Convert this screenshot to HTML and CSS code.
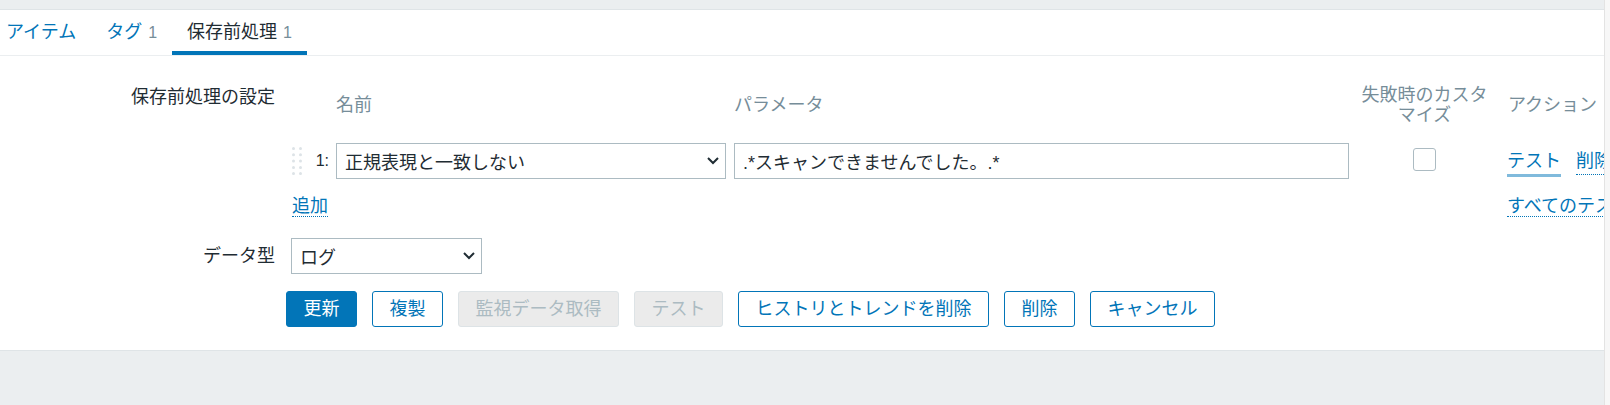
FILE: index.html
```html
<!DOCTYPE html>
<html lang="ja">
<head>
<meta charset="utf-8">
<title>保存前処理</title>
<link rel="stylesheet" href="styles.css">
</head>
<body>
<div class="page">
  <div class="main">
    <div class="panel">
      <ul class="tabs">
        <li class="tab">アイテム</li>
        <li class="tab">タグ<span class="count">1</span></li>
        <li class="tab active">保存前処理<span class="count">1</span></li>
      </ul>
      <div class="form">
        <div class="label label-top">保存前処理の設定</div>
        <div class="field">
          <div class="pp-table">
            <div class="th"></div>
            <div class="th"></div>
            <div class="th th-name">名前</div>
            <div class="th">パラメータ</div>
            <div class="th th-center">失敗時のカスタマイズ</div>
            <div class="th th-action">アクション</div>

            <div class="td td-handle">
              <svg width="10" height="28" viewBox="0 0 10 28" class="handle">
                <g fill="#dde3e7">
                  <circle cx="1.5" cy="1.5" r="1.5"/><circle cx="8.5" cy="1.5" r="1.5"/>
                  <circle cx="1.5" cy="7.8" r="1.5"/><circle cx="8.5" cy="7.8" r="1.5"/>
                  <circle cx="1.5" cy="14.1" r="1.5"/><circle cx="8.5" cy="14.1" r="1.5"/>
                  <circle cx="1.5" cy="20.4" r="1.5"/><circle cx="8.5" cy="20.4" r="1.5"/>
                  <circle cx="1.5" cy="26.5" r="1.5"/><circle cx="8.5" cy="26.5" r="1.5"/>
                </g>
              </svg>
            </div>
            <div class="td td-num">1:</div>
            <div class="td">
              <div class="select select-name"><span>正規表現と一致しない</span>
                <svg class="chevron" width="12" height="8" viewBox="0 0 12 8"><polyline points="1,1 6,6 11,1" fill="none" stroke="#1f2c33" stroke-width="2"/></svg>
              </div>
            </div>
            <div class="td">
              <div class="input">.*スキャンできませんでした。.*</div>
            </div>
            <div class="td td-center"><span class="checkbox"></span></div>
            <div class="td td-action">
              <div class="links"><a class="link-focus">テスト</a><a class="link link-gap">削除</a></div>
            </div>

            <div class="tf tf-add"><a class="link">追加</a></div>
            <div class="tf tf-action"><a class="link">すべてのテスト</a></div>
          </div>
        </div>

        <div class="label">データ型</div>
        <div class="field">
          <div class="select select-type"><span>ログ</span>
            <svg class="chevron" width="12" height="8" viewBox="0 0 12 8"><polyline points="1,1 6,6 11,1" fill="none" stroke="#1f2c33" stroke-width="2"/></svg>
          </div>
        </div>

        <div class="label"></div>
        <div class="field buttons">
          <button class="btn btn-primary">更新</button>
          <button class="btn btn-alt">複製</button>
          <button class="btn btn-disabled">監視データ取得</button>
          <button class="btn btn-disabled">テスト</button>
          <button class="btn btn-alt">ヒストリとトレンドを削除</button>
          <button class="btn btn-alt">削除</button>
          <button class="btn btn-alt">キャンセル</button>
        </div>
      </div>
    </div>
  </div>
  <div class="scrollbar"></div>
</div>
</body>
</html>
```

FILE: styles.css
```css
* { box-sizing: border-box; }

body {
  margin: 0;
  font-family: "Liberation Sans", "Noto Sans CJK JP", sans-serif;
  font-size: 18px;
  color: #1f2c33;
}

.page {
  display: flex;
  height: 405px;
  background: #ebeef0;
}

.main {
  flex: 1;
  min-width: 0;
  overflow: hidden;
  padding-top: 9px;
}

.scrollbar {
  width: 6px;
  background: #f7f7f7;
  border-left: 1px solid #e3e3e3;
}

.panel {
  background: #ffffff;
  border-top: 1px solid #dfe4e7;
  border-bottom: 1px solid #dfe4e7;
}

/* tabs */
.tabs {
  display: flex;
  list-style: none;
  margin: 0;
  padding: 0;
  height: 46px;
  border-bottom: 1px solid #ebeef0;
}

.tab {
  display: flex;
  align-items: center;
  padding: 0 15px;
  line-height: 27px;
  color: #0275b8;
}

.tab:first-child { padding-left: 6px; }

.tab.active {
  color: #1f2c33;
  box-shadow: inset 0 -4px 0 #0275b8;
}

.count {
  color: #768d99;
  font-size: 16px;
  margin-left: 6px;
}

/* form */
.form {
  display: grid;
  grid-template-columns: 275px 1fr;
  column-gap: 8px;
  row-gap: 17px;
  padding: 28px 0 23px;
}

.label {
  text-align: right;
  line-height: 36px;
  white-space: nowrap;
}

.label-top { line-height: 27px; }

.field { min-width: 0; }

/* preprocessing table */
.pp-table {
  display: grid;
  grid-template-columns: 22px 31px 398px 623px 135px 240px;
  width: 1449px;
  margin-bottom: 1px;
}

.th {
  height: 42px;
  display: flex;
  align-items: center;
  color: #768d99;
  line-height: 20px;
}

.th-center {
  justify-content: center;
  text-align: center;
}

.th-action { padding-left: 16px; white-space: nowrap; }

.td {
  height: 36px;
  margin: 17px 0 4px;
  display: flex;
  align-items: center;
}

.td-handle { padding-left: 9px; }

.td-num {
  justify-content: flex-end;
  padding-right: 7px;
  font-size: 16px;
}

.td-center { justify-content: center; }

.td-action { padding-left: 15px; }

.links {
  line-height: 27px;
  white-space: nowrap;
}

.select {
  height: 36px;
  border: 1px solid #acbbc2;
  display: flex;
  align-items: center;
  justify-content: space-between;
  padding: 0 6px 0 8px;
  background: #ffffff;
}

.select-name { width: 390px; }

.select-type {
  width: 191px;
  margin-left: 8px;
}

.chevron { display: block; }

.input {
  width: 615px;
  height: 36px;
  border: 1px solid #acbbc2;
  padding: 0 8px;
  display: flex;
  align-items: center;
  white-space: nowrap;
}

.checkbox {
  width: 23px;
  height: 23px;
  border: 1px solid #acbbc2;
  border-radius: 3px;
  margin-top: -3px;
}

a {
  color: #0275b8;
  text-decoration: none;
}

.link { border-bottom: 1px dotted #0275b8; }

.td-action .link,
.link-focus { padding-bottom: 3px; }

.link-focus { border-bottom: 3px solid #80badc; }

.link-gap { margin-left: 15px; }

.tf {
  margin-top: 10px;
  line-height: 27px;
  white-space: nowrap;
}

.tf-add {
  grid-column: 1 / 4;
  padding-left: 9px;
}

.tf-action {
  grid-column: 6 / 7;
  padding-left: 15px;
}

/* buttons */
.buttons {
  display: flex;
  gap: 15px;
  padding-left: 3px;
}

.btn {
  height: 36px;
  padding: 0 16.5px;
  border: 1px solid #0275b8;
  border-radius: 3px;
  font-family: inherit;
  font-size: 18px;
  line-height: 27px;
  white-space: nowrap;
}

.btn-primary {
  background: #0275b8;
  color: #ffffff;
}

.btn-alt {
  background: #ffffff;
  color: #0275b8;
}

.btn-disabled {
  background: #ebebeb;
  border-color: #dde3e6;
  color: #acbbc2;
}
```
